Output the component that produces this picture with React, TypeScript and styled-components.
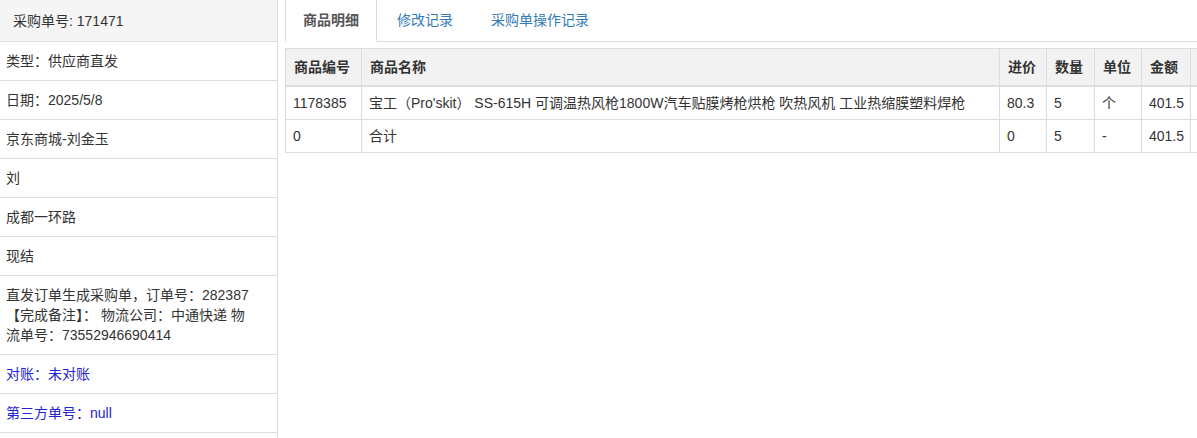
import React from "react";
import styled, { createGlobalStyle } from "styled-components";

const Global = createGlobalStyle`
  html, body {
    margin: 0;
    padding: 0;
    overflow: hidden;
    background: #fff;
  }
  body {
    font-family: "Liberation Sans", "Noto Sans CJK SC", sans-serif;
    font-size: 14px;
    line-height: 20px;
    color: #333;
  }
`;

const Page = styled.div`
  display: flex;
  height: 438px;
  width: 1197px;
  overflow: hidden;
`;

const Side = styled.aside`
  flex: 0 0 277px;
  border-right: 1px solid #ddd;
  display: flex;
  flex-direction: column;
`;

const SideHeader = styled.div`
  background: #f5f5f5;
  padding: 11px 13px 10px;
  border-bottom: 1px solid #ddd;
  color: #333;
`;

const SideRow = styled.div<{ $blue?: boolean }>`
  padding: 9px 6px 9px 6px;
  border-bottom: 1px solid #ddd;
  color: ${(p) => (p.$blue ? "#2323d6" : "#333")};
`;

const Main = styled.main`
  flex: 1;
  min-width: 0;
  padding-left: 7px;
  overflow: hidden;
`;

const Tabs = styled.ul`
  display: flex;
  margin: 0;
  padding: 0;
  list-style: none;
  border-bottom: 1px solid #ddd;
  height: 41px;
`;

const Tab = styled.li<{ $active?: boolean }>`
  margin-right: 2px;
  margin-bottom: -1px;
  padding: 10px 17px 10px;
  border: 1px solid ${(p) => (p.$active ? "#ddd" : "transparent")};
  border-top: none;
  border-bottom-color: ${(p) => (p.$active ? "#fff" : "transparent")};
  background: ${(p) => (p.$active ? "#fff" : "transparent")};
  color: ${(p) => (p.$active ? "#555" : "#337ab7")};
  font-weight: ${(p) => (p.$active ? "bold" : "normal")};
  cursor: pointer;
  white-space: nowrap;
`;

const Table = styled.table`
  margin-top: 6px;
  border-collapse: collapse;
  table-layout: fixed;
  width: 1000px;
  border: 1px solid #ddd;
`;

const Th = styled.th`
  background: #f2f2f2;
  text-align: left;
  font-weight: bold;
  padding: 8px 8px;
  border: 1px solid #ddd;
  border-bottom-width: 2px;
  white-space: nowrap;
  overflow: hidden;
`;

const Td = styled.td<{ $action?: boolean }>`
  padding: 6px 7px;
  border: 1px solid #ddd;
  white-space: nowrap;
  overflow: hidden;
  color: ${(p) => (p.$action ? "#f0ad4e" : "#333")};
`;

const cols = [76, 638, 47, 48, 47, 49, 95];

const rows = [
  ["1178385", "宝工（Pro'skit） SS-615H 可调温热风枪1800W汽车贴膜烤枪烘枪 吹热风机 工业热缩膜塑料焊枪", "80.3", "5", "个", "401.5"],
  ["0", "合计", "0", "5", "-", "401.5"],
];

export default function App() {
  return (
    <>
      <Global />
      <Page>
        <Side>
          <SideHeader>采购单号: 171471</SideHeader>
          <SideRow>类型：供应商直发</SideRow>
          <SideRow>日期：2025/5/8</SideRow>
          <SideRow>京东商城-刘金玉</SideRow>
          <SideRow>刘</SideRow>
          <SideRow>成都一环路</SideRow>
          <SideRow>现结</SideRow>
          <SideRow>
            直发订单生成采购单，订单号：282387
            <br />
            【完成备注】： 物流公司：中通快递 物
            <br />
            流单号：73552946690414
          </SideRow>
          <SideRow $blue>对账：未对账</SideRow>
          <SideRow $blue>第三方单号：null</SideRow>
          <SideRow />
        </Side>
        <Main>
          <Tabs>
            <Tab $active>商品明细</Tab>
            <Tab>修改记录</Tab>
            <Tab>采购单操作记录</Tab>
          </Tabs>
          <Table>
            <colgroup>
              {cols.map((w, i) => (
                <col key={i} style={{ width: w }} />
              ))}
            </colgroup>
            <thead>
              <tr>
                <Th>商品编号</Th>
                <Th>商品名称</Th>
                <Th>进价</Th>
                <Th>数量</Th>
                <Th>单位</Th>
                <Th>金额</Th>
                <Th />
              </tr>
            </thead>
            <tbody>
              {rows.map((r, i) => (
                <tr key={i}>
                  {r.map((c, j) => (
                    <Td key={j}>{c}</Td>
                  ))}
                  <Td $action>修改</Td>
                </tr>
              ))}
            </tbody>
          </Table>
        </Main>
      </Page>
    </>
  );
}
